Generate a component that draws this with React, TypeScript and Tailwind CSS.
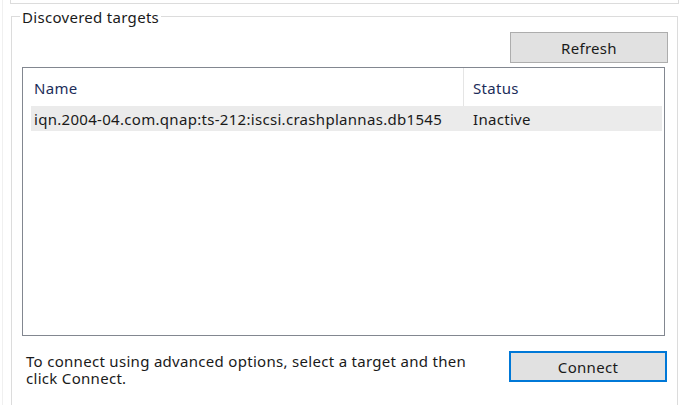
import React from "react";

export default function App() {
  return (
    <div
      className="w-[689px] h-[405px] bg-white overflow-hidden pl-[2px]"
      style={{ fontFamily: '"Noto Sans", "Open Sans", sans-serif' }}
    >
      <div className="h-full border-l border-[#f0f0f0] flex flex-col">
        {/* upper group box remnant */}
        <div className="ml-[7px] w-[669px] h-[4px] border-l border-r border-b border-[#dcdcdc]" />
        {/* Discovered targets group */}
        <div className="relative mt-[12px] ml-[8px] w-[667px] flex-1 border-l border-r border-t border-[#dcdcdc] flex flex-col text-[15px] tracking-[0.3px] text-[#1a1a1a]">
          <div className="absolute left-[8px] top-[-10px] bg-white px-[2px] leading-[20px]">
            Discovered targets
          </div>
          <div className="flex justify-end pr-[9px] pt-[15px]">
            <button className="w-[158px] h-[31px] pt-[2px] bg-[#e1e1e1] border border-[#adadad] text-[15px] tracking-[0.3px] text-[#1a1a1a]">
              Refresh
            </button>
          </div>
          <div className="ml-[10px] mt-[4px] w-[643px] h-[269px] border border-[#828790] flex flex-col pl-[8px] pr-[2px]">
            <div className="flex h-[38px] items-center text-[#1c2d5a]">
              <div className="w-[433px] h-full flex items-center pl-[3px] pt-[3px] border-r border-[#e5e5e5]">
                Name
              </div>
              <div className="flex-1 h-full flex items-center pl-[9px] pt-[3px]">Status</div>
            </div>
            <div className="flex h-[25px] items-center bg-[#ebebeb] pt-[2px]">
              <div className="w-[433px] pl-[3px] whitespace-nowrap">
                iqn.2004-04.com.qnap:ts-212:iscsi.crashplannas.db1545
              </div>
              <div className="flex-1 pl-[9px]">Inactive</div>
            </div>
          </div>
          <div className="flex items-start mt-[14px]">
            <div className="ml-[14px] w-[462px] leading-[17px] pt-[3px]">
              To connect using advanced options, select a target and then click Connect.
            </div>
            <button className="ml-[21px] mt-[1px] w-[158px] h-[31px] pt-[2px] bg-[#e1e1e1] border-2 border-[#0078d7] text-[15px] tracking-[0.3px] text-[#1a1a1a]">
              Connect
            </button>
          </div>
        </div>
      </div>
    </div>
  );
}
